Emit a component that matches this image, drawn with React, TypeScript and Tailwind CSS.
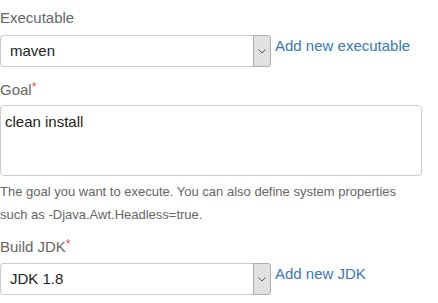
import React from "react";

type SelectProps = {
  value: string;
  linkText: string;
};

function Chevron() {
  return (
    <svg width="8" height="5" viewBox="0 0 8 5" fill="none">
      <path d="M0.5 0.5 L4 4 L7.5 0.5" stroke="#555" strokeWidth="1" />
    </svg>
  );
}

function SelectRow({ value, linkText }: SelectProps) {
  return (
    <div className="flex items-start">
      <div className="flex h-[32px] w-[271px]">
        <div className="flex flex-1 items-center rounded-l-[4px] border border-r-0 border-[#cccccc] bg-white pl-[9px] text-[15px] text-[#222]">
          {value}
        </div>
        <div className="flex w-[18px] items-center justify-center rounded-r-[3px] border border-[#adadad] bg-[#e1e1e1]">
          <Chevron />
        </div>
      </div>
      <a className="ml-[4px] mt-[1px] text-[15px] leading-[20px] text-[#3a77b9]">
        {linkText}
      </a>
    </div>
  );
}

function Label({ text, required }: { text: string; required?: boolean }) {
  return (
    <div className="text-[15px] leading-[20px] text-[#666]">
      {text}
      {required && (
        <span className="relative top-[-4px] text-[12px] leading-none text-[#d9534f]">
          *
        </span>
      )}
    </div>
  );
}

export default function App() {
  return (
    <div className="h-[303px] w-[438px] overflow-hidden bg-white font-['Liberation_Sans',Arial,sans-serif]">
      <div className="pt-[8px]">
        <Label text="Executable" />
        <div className="mt-[7px]">
          <SelectRow value="maven" linkText="Add new executable" />
        </div>

        <div className="mt-[13px]">
          <Label text="Goal" required />
        </div>
        <div className="mt-[5px] h-[71px] w-[422px] rounded-[4px] border border-[#cccccc] px-[4px] pt-[6px] text-[15px] leading-[20px] text-[#222]">
          clean install
        </div>
        <div className="mt-[4px] text-[13px] leading-[23px] text-[#666]">
          The goal you want to execute. You can also define system properties
          <br />
          such as -Djava.Awt.Headless=true.
        </div>

        <div className="mt-[11px]">
          <Label text="Build JDK" required />
        </div>
        <div className="mt-[6px]">
          <SelectRow value="JDK 1.8" linkText="Add new JDK" />
        </div>
      </div>
    </div>
  );
}
